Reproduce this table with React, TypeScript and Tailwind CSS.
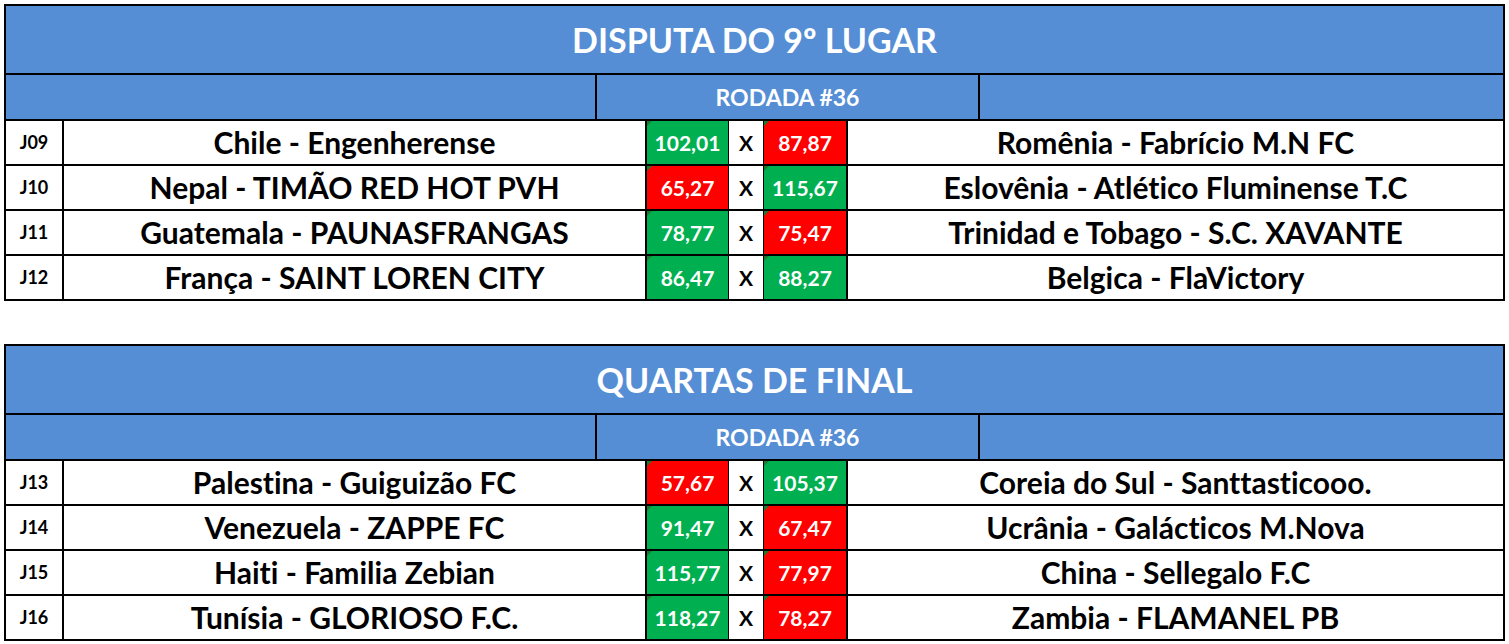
type Match = {
  id: string;
  home: string;
  homeScore: string;
  homeWin: boolean;
  away: string;
  awayScore: string;
  awayWin: boolean;
};

type Block = {
  title: string;
  round: string;
  matches: Match[];
};

// cores conforme a planilha (nao calculadas)
const blocks: Block[] = [
  {
    title: 'DISPUTA DO 9º LUGAR',
    round: 'RODADA #36',
    matches: [
      { id: 'J09', home: 'Chile - Engenherense', homeScore: '102,01', homeWin: true, away: 'Romênia - Fabrício M.N FC', awayScore: '87,87', awayWin: false },
      { id: 'J10', home: 'Nepal - TIMÃO RED HOT PVH', homeScore: '65,27', homeWin: false, away: 'Eslovênia - Atlético Fluminense T.C', awayScore: '115,67', awayWin: true },
      { id: 'J11', home: 'Guatemala - PAUNASFRANGAS', homeScore: '78,77', homeWin: true, away: 'Trinidad e Tobago - S.C. XAVANTE', awayScore: '75,47', awayWin: false },
      { id: 'J12', home: 'França - SAINT LOREN CITY', homeScore: '86,47', homeWin: true, away: 'Belgica - FlaVictory', awayScore: '88,27', awayWin: true },
    ],
  },
  {
    title: 'QUARTAS DE FINAL',
    round: 'RODADA #36',
    matches: [
      { id: 'J13', home: 'Palestina - Guiguizão FC', homeScore: '57,67', homeWin: false, away: 'Coreia do Sul - Santtasticooo.', awayScore: '105,37', awayWin: true },
      { id: 'J14', home: 'Venezuela - ZAPPE FC', homeScore: '91,47', homeWin: true, away: 'Ucrânia - Galácticos M.Nova', awayScore: '67,47', awayWin: false },
      { id: 'J15', home: 'Haiti - Familia Zebian', homeScore: '115,77', homeWin: true, away: 'China - Sellegalo F.C', awayScore: '77,97', awayWin: false },
      { id: 'J16', home: 'Tunísia - GLORIOSO F.C.', homeScore: '118,27', homeWin: true, away: 'Zambia - FLAMANEL PB', awayScore: '78,27', awayWin: false },
    ],
  },
];

function ScoreCell({ value, win, wide }: { value: string; win: boolean; wide?: boolean }) {
  return (
    <div
      className={`relative ${wide ? 'w-[82px]' : 'w-[81px]'} shrink-0 flex items-center justify-center text-white text-[21px] font-bold ${
        win ? 'bg-[#00b050]' : 'bg-[#ff0000]'
      }`}
    >
      {/* marcador de erro do Excel no canto */}
      <span className="absolute left-0 top-0 w-0 h-0 border-t-[5px] border-t-[#1e7a2e] border-r-[5px] border-r-transparent" />
      {value}
    </div>
  );
}

function MatchRow({ m, last }: { m: Match; last: boolean }) {
  return (
    <div className={`flex ${last ? 'h-[43px]' : 'h-[45px] border-b-2 border-black'}`}>
      <div className="w-[58px] shrink-0 flex items-center justify-center text-[18px] font-bold border-r-2 border-black">
        {m.id}
      </div>
      <div className="w-[583px] shrink-0 flex items-center justify-center text-[30px] font-bold border-r-2 border-black">
        {m.home}
      </div>
      <ScoreCell value={m.homeScore} win={m.homeWin} />
      <div className="w-[36px] shrink-0 flex items-center justify-center text-[21px] font-bold border-x border-black">
        X
      </div>
      <ScoreCell value={m.awayScore} win={m.awayWin} wide />
      <div className="flex-1 flex items-center justify-center text-[30px] font-bold border-l-2 border-black">
        {m.away}
      </div>
    </div>
  );
}

function Table({ block }: { block: Block }) {
  return (
    <div className="border-2 border-black bg-white">
      <div className="h-[69px] flex items-center justify-center bg-[#558ed5] text-white text-[34px] font-bold border-b-2 border-black">
        {block.title}
      </div>
      <div className="flex h-[46px] bg-[#558ed5] border-b-2 border-black">
        <div className="w-[591px] shrink-0 border-r-2 border-black" />
        <div className="w-[383px] shrink-0 flex items-center justify-center text-white text-[23px] font-bold border-r-2 border-black">
          {block.round}
        </div>
        <div className="flex-1" />
      </div>
      {block.matches.map((m, i) => (
        <MatchRow key={m.id} m={m} last={i === block.matches.length - 1} />
      ))}
    </div>
  );
}

export default function App() {
  return (
    <div className="w-[1509px] h-[644px] bg-white font-['Lato',sans-serif] [font-variant-ligatures:none] text-black overflow-hidden">
      <div className="pt-[4px] pl-[4px] w-[1505px] flex flex-col gap-[43px]">
        {blocks.map((b) => (
          <Table key={b.title} block={b} />
        ))}
      </div>
    </div>
  );
}
